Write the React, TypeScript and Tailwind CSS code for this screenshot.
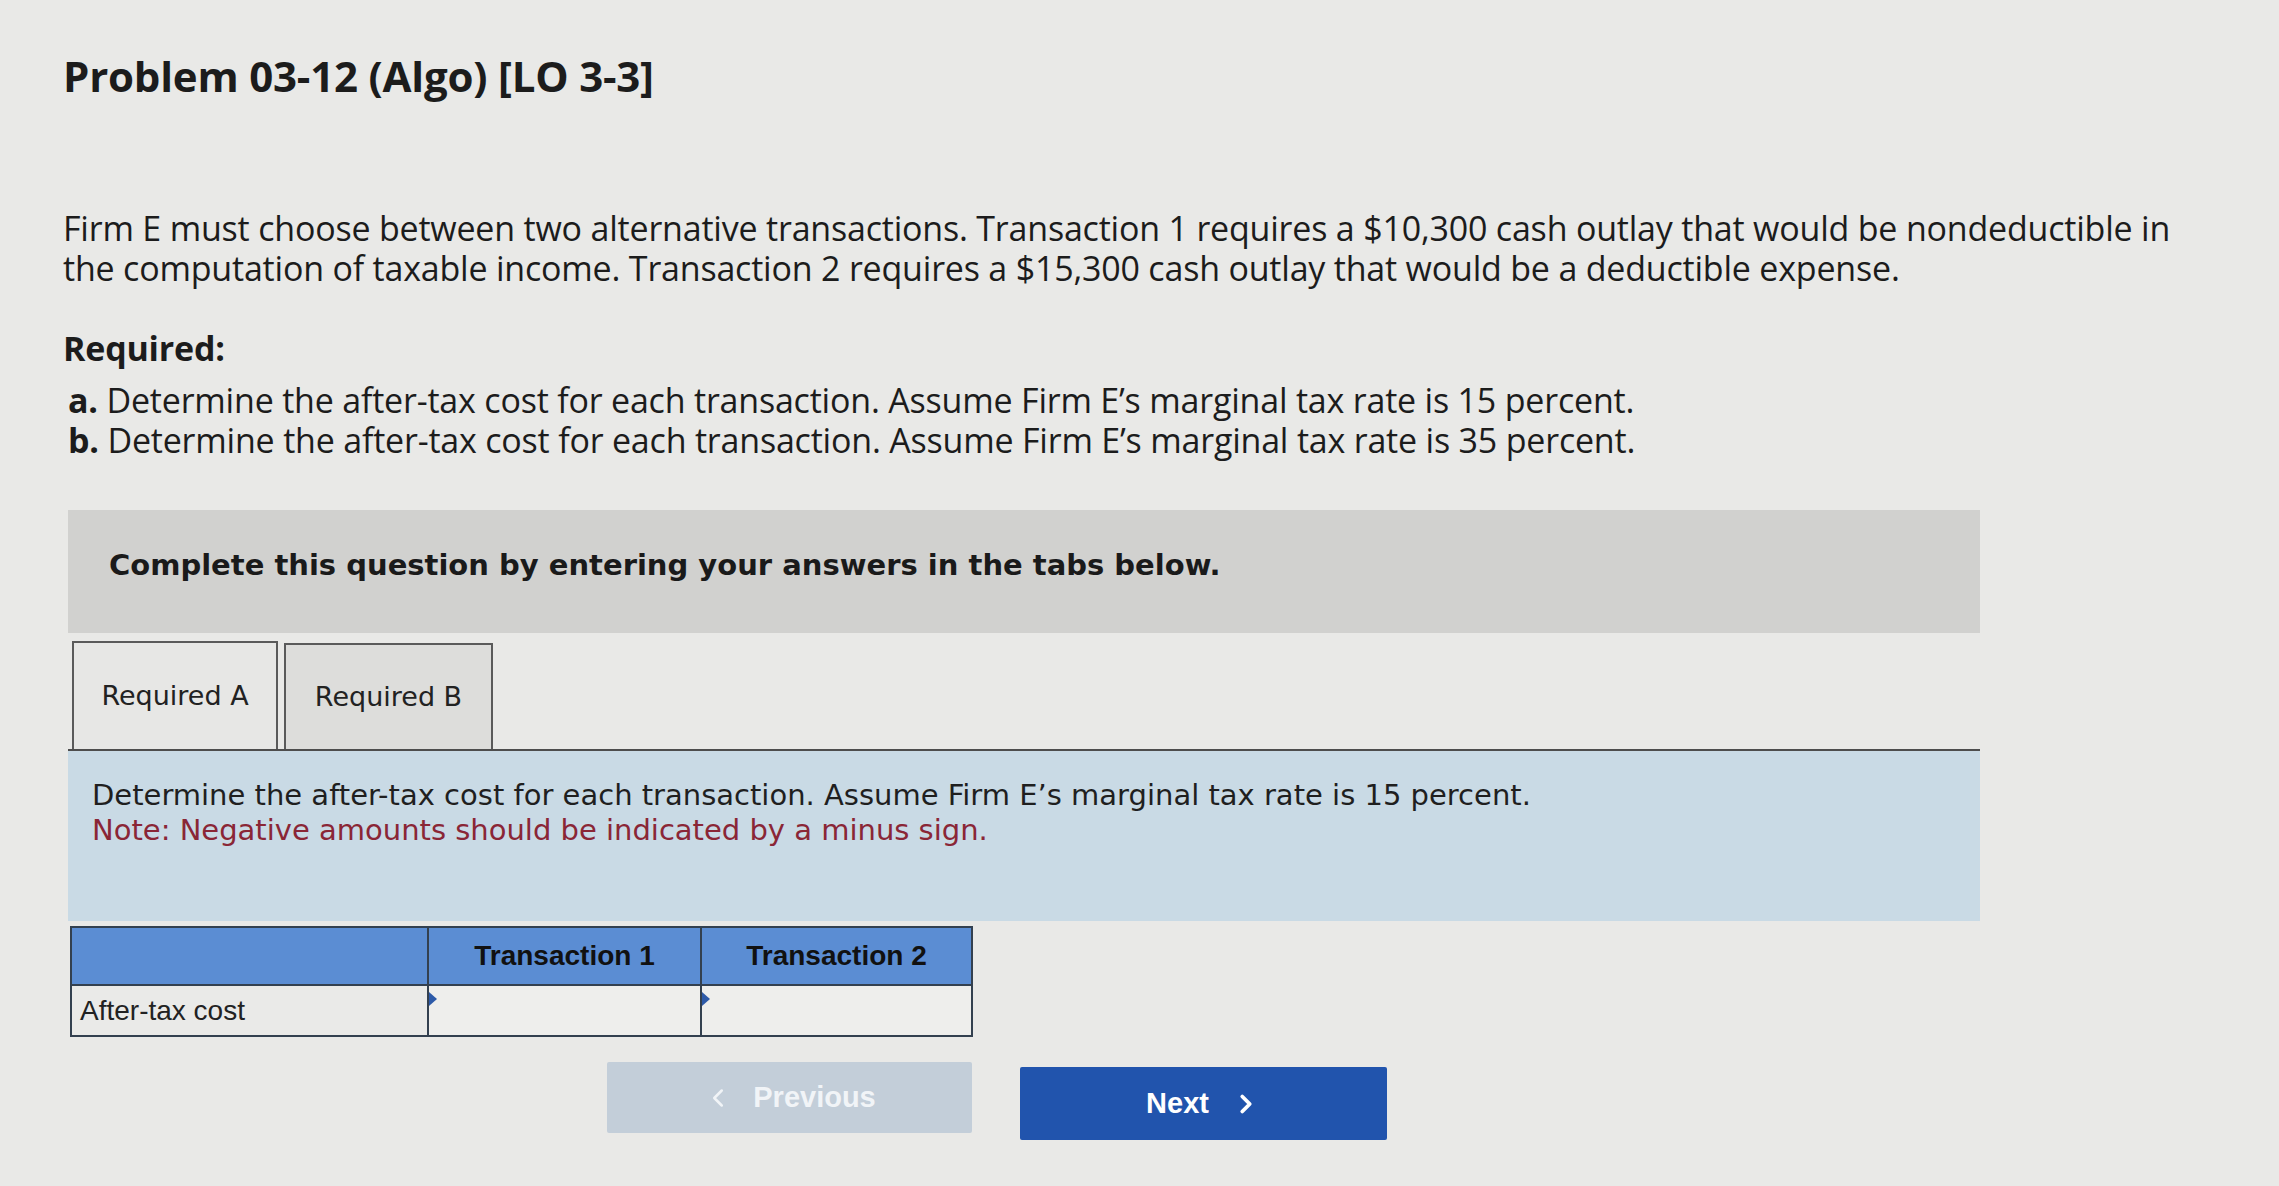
import { ChevronLeft, ChevronRight } from 'lucide-react'

const arial = { fontFamily: '"Liberation Sans", Arial, sans-serif' }

function Triangle() {
	return (
		<span className="absolute left-0 top-[6px] h-0 w-0 border-y-[7px] border-l-[8px] border-y-transparent border-l-[#2d5aa8]" />
	)
}

export default function App() {
	return (
		<main className="min-h-[1186px] w-full bg-[#e9e9e7] pl-[63px] pt-[50px] text-[#1c1c1c] font-['Open_Sans',Arial,sans-serif]">
			<h1 className="text-[42px] font-bold leading-[52px] tracking-[-0.2px]">
				Problem 03-12 (Algo) [LO 3-3]
			</h1>

			<p className="mt-[106px] w-[2140px] text-[34px] leading-[40px] tracking-[-0.2px]">
				Firm E must choose between two alternative transactions. Transaction 1 requires a $10,300 cash outlay that would be nondeductible in the computation of taxable income. Transaction 2 requires a $15,300 cash outlay that would be a deductible expense.
			</p>

			<div className="mt-[40px] text-[34px] leading-[40px] tracking-[-0.2px]">
				<p className="font-bold">Required:</p>
				<p className="mt-[12px] pl-[5px]">
					<span className="font-bold">a.</span> Determine the after-tax cost for each transaction. Assume Firm E’s marginal tax rate is 15 percent.
				</p>
				<p className="pl-[5px]">
					<span className="font-bold">b.</span> Determine the after-tax cost for each transaction. Assume Firm E’s marginal tax rate is 35 percent.
				</p>
			</div>

			<div className="ml-[5px] w-[1912px] font-['DejaVu_Sans',Verdana,sans-serif]">
				<div className="mt-[50px] flex h-[123px] items-center bg-[#d1d1cf] pl-[41px] pb-[12px]">
					<p className="text-[29px] font-bold text-[#1a1a1a]">
						Complete this question by entering your answers in the tabs below.
					</p>
				</div>

				<div className="mt-[8px] flex gap-[6px] pl-[4px]">
					<div className="flex h-[108px] w-[206px] items-center justify-center border-x-2 border-t-2 border-[#5a5a5a] bg-[#e7e7e5] text-[27px] text-[#222]">
						Required A
					</div>
					<div className="flex h-[106px] w-[209px] items-center justify-center self-end border-x-2 border-t-2 border-[#5a5a5a] bg-[#dddddb] text-[27px] text-[#222]">
						Required B
					</div>
				</div>

				<div className="h-[172px] border-t-2 border-[#4d4d4d] bg-[#c9dae5] px-[24px] pt-[27px] text-[29px] leading-[35px]">
					<p className="text-[#1f1f1f]">
						Determine the after-tax cost for each transaction. Assume Firm E’s marginal tax rate is 15 percent.
					</p>
					<p className="text-[#8a2636]">Note: Negative amounts should be indicated by a minus sign.</p>
				</div>
			</div>

			<table className="ml-[7px] mt-[5px] border-collapse border-2 border-[#33404f] text-[28px]" style={arial}>
				<thead>
					<tr className="h-[58px] bg-[#5b8dd3]">
						<th className="w-[357px] border-2 border-[#33404f]" />
						<th className="w-[273px] border-2 border-[#33404f] font-bold text-[#111]">Transaction 1</th>
						<th className="w-[271px] border-2 border-[#33404f] font-bold text-[#111]">Transaction 2</th>
					</tr>
				</thead>
				<tbody>
					<tr className="h-[51px] bg-[#eaeae8]">
						<td className="border-2 border-[#33404f] pl-[8px] text-left text-[#222]">After-tax cost</td>
						<td className="relative border-2 border-[#33404f] bg-[#eeeeec]">
							<Triangle />
						</td>
						<td className="relative border-2 border-[#33404f] bg-[#eeeeec]">
							<Triangle />
						</td>
					</tr>
				</tbody>
			</table>

			<div className="ml-[544px] mt-[25px] flex items-start gap-[48px]" style={arial}>
				<button className="flex h-[71px] w-[365px] items-center justify-center gap-[20px] rounded-[2px] bg-[#c3ced9] text-[29px] font-bold text-[#f1f4f7]">
					<ChevronLeft className="h-[30px] w-[30px]" strokeWidth={2} />
					Previous
				</button>
				<button className="mt-[5px] flex h-[73px] w-[367px] items-center justify-center gap-[22px] rounded-[2px] bg-[#2154ad] text-[29px] font-bold text-white">
					Next
					<ChevronRight className="h-[30px] w-[30px]" strokeWidth={3} />
				</button>
			</div>
		</main>
	)
}
